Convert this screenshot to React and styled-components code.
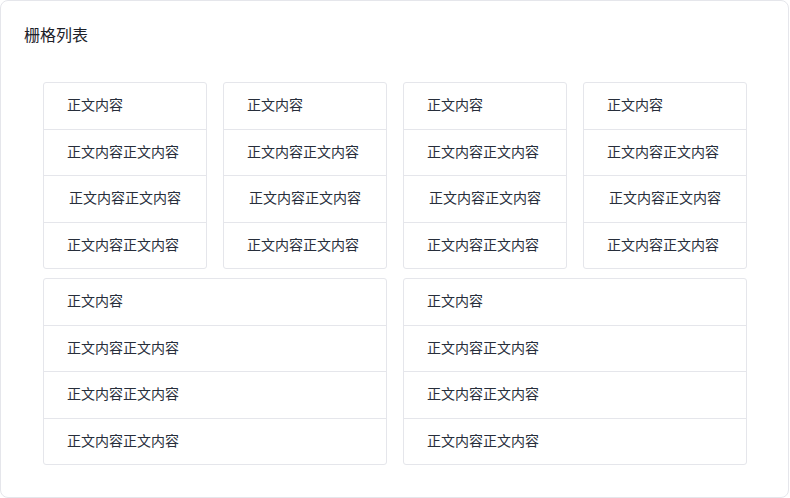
import React from "react";
import styled, { createGlobalStyle } from "styled-components";

const GlobalStyle = createGlobalStyle`
	html, body {
		margin: 0;
		padding: 0;
		background: #fff;
		font-family: "Noto Sans CJK SC", "Noto Sans", sans-serif;
	}
`;

const Panel = styled.div`
	box-sizing: border-box;
	width: 789px;
	height: 498px;
	border: 1px solid #e5e6eb;
	border-radius: 8px;
	background: #fff;
	padding: 21px 0 0 23px;
`;

const Title = styled.h2`
	margin: 0;
	font-size: 16px;
	line-height: 24px;
	font-weight: 400;
	color: #1d2129;
`;

const Grid = styled.div`
	display: grid;
	grid-template-columns: repeat(4, 164px);
	column-gap: 16px;
	row-gap: 9px;
	margin: 36px 0 0 19px;
`;

const Card = styled.ul`
	grid-column: span ${(props) => props.span || 1};
	list-style: none;
	margin: 0;
	padding: 0;
	border: 1px solid #e5e6eb;
	border-radius: 3px;
	height: 187px;
	box-sizing: border-box;
	display: flex;
	flex-direction: column;
`;

const Item = styled.li`
	flex: 1;
	display: flex;
	align-items: center;
	padding-left: ${(props) => (props.shift ? 25 : 23)}px;
	padding-bottom: 3px;
	font-size: 14px;
	color: #272e3b;
	border-top: 1px solid #e5e6eb;

	&:first-child {
		border-top: none;
	}
`;

const rows = ["正文内容", "正文内容正文内容", "正文内容正文内容", "正文内容正文内容"];

const cards = [
	{ id: 1, span: 1 },
	{ id: 2, span: 1 },
	{ id: 3, span: 1 },
	{ id: 4, span: 1 },
	{ id: 5, span: 2 },
	{ id: 6, span: 2 },
];

export default function App() {
	return (
		<>
			<GlobalStyle />
			<Panel>
				<Title>栅格列表</Title>
				<Grid>
					{cards.map((card) => (
						<Card key={card.id} span={card.span}>
							{rows.map((text, i) => (
								<Item key={i} shift={card.span === 1 && i === 2}>
									{text}
								</Item>
							))}
						</Card>
					))}
				</Grid>
			</Panel>
		</>
	);
}
